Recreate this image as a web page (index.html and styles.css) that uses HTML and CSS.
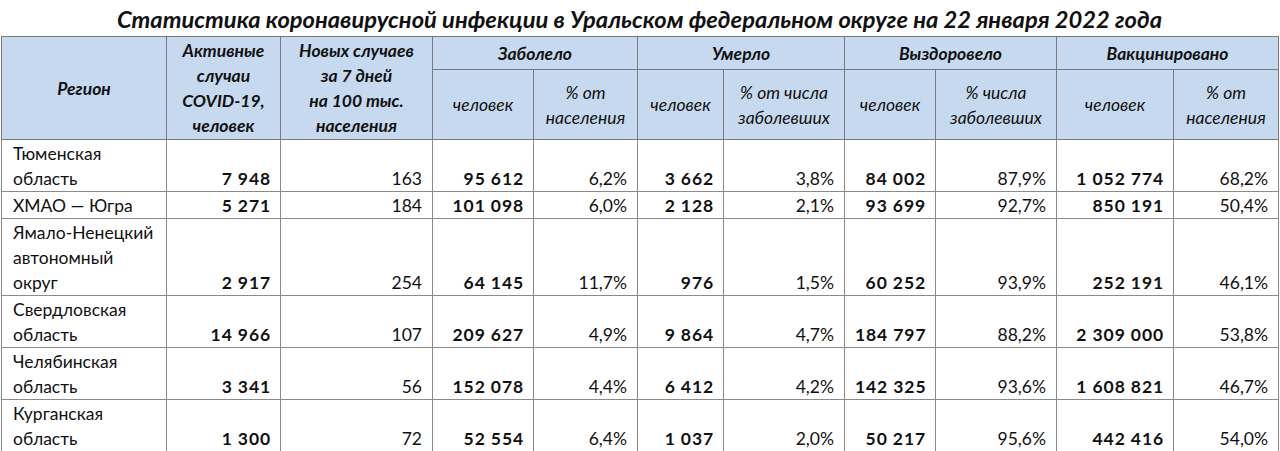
FILE: index.html
```html
<!DOCTYPE html>
<html lang="ru">
<head>
<meta charset="utf-8">
<title>Статистика коронавирусной инфекции</title>
<link rel="stylesheet" href="styles.css">
</head>
<body>
<h1 class="title">Статистика коронавирусной инфекции в Уральском федеральном округе на 22 января 2022 года</h1>
<table class="stats">
  <colgroup>
    <col class="c-region">
    <col class="c-active">
    <col class="c-new">
    <col class="c-ill-n">
    <col class="c-ill-p">
    <col class="c-died-n">
    <col class="c-died-p">
    <col class="c-rec-n">
    <col class="c-rec-p">
    <col class="c-vac-n">
    <col class="c-vac-p">
  </colgroup>
  <thead>
    <tr class="h1">
      <th rowspan="2" class="bold">Регион</th>
      <th rowspan="2" class="bold">Активные<br>случаи<br>COVID-19,<br>человек</th>
      <th rowspan="2" class="bold">Новых случаев<br>за 7 дней<br>на 100 тыс.<br>населения</th>
      <th colspan="2" class="bold">Заболело</th>
      <th colspan="2" class="bold">Умерло</th>
      <th colspan="2" class="bold">Выздоровело</th>
      <th colspan="2" class="bold">Вакцинировано</th>
    </tr>
    <tr class="h2">
      <th>человек</th>
      <th>% от<br>населения</th>
      <th>человек</th>
      <th>% от числа<br>заболевших</th>
      <th>человек</th>
      <th>% числа<br>заболевших</th>
      <th>человек</th>
      <th>% от<br>населения</th>
    </tr>
  </thead>
  <tbody>
    <tr>
      <td class="reg">Тюменская<br>область</td>
      <td class="b">7 948</td><td>163</td>
      <td class="b">95 612</td><td>6,2%</td>
      <td class="b">3 662</td><td>3,8%</td>
      <td class="b">84 002</td><td>87,9%</td>
      <td class="b">1 052 774</td><td>68,2%</td>
    </tr>
    <tr>
      <td class="reg">ХМАО — Югра</td>
      <td class="b">5 271</td><td>184</td>
      <td class="b">101 098</td><td>6,0%</td>
      <td class="b">2 128</td><td>2,1%</td>
      <td class="b">93 699</td><td>92,7%</td>
      <td class="b">850 191</td><td>50,4%</td>
    </tr>
    <tr>
      <td class="reg">Ямало-Ненецкий<br>автономный<br>округ</td>
      <td class="b">2 917</td><td>254</td>
      <td class="b">64 145</td><td>11,7%</td>
      <td class="b">976</td><td>1,5%</td>
      <td class="b">60 252</td><td>93,9%</td>
      <td class="b">252 191</td><td>46,1%</td>
    </tr>
    <tr>
      <td class="reg">Свердловская<br>область</td>
      <td class="b">14 966</td><td>107</td>
      <td class="b">209 627</td><td>4,9%</td>
      <td class="b">9 864</td><td>4,7%</td>
      <td class="b">184 797</td><td>88,2%</td>
      <td class="b">2 309 000</td><td>53,8%</td>
    </tr>
    <tr>
      <td class="reg">Челябинская<br>область</td>
      <td class="b">3 341</td><td>56</td>
      <td class="b">152 078</td><td>4,4%</td>
      <td class="b">6 412</td><td>4,2%</td>
      <td class="b">142 325</td><td>93,6%</td>
      <td class="b">1 608 821</td><td>46,7%</td>
    </tr>
    <tr>
      <td class="reg">Курганская<br>область</td>
      <td class="b">1 300</td><td>72</td>
      <td class="b">52 554</td><td>6,4%</td>
      <td class="b">1 037</td><td>2,0%</td>
      <td class="b">50 217</td><td>95,6%</td>
      <td class="b">442 416</td><td>54,0%</td>
    </tr>
  </tbody>
</table>
</body>
</html>
```
FILE: styles.css
```css
html, body {
  margin: 0;
  padding: 0;
  background: #ffffff;
}
body {
  font-family: Lato, "Open Sans", "Noto Sans", sans-serif;
  color: #111;
  padding-left: 1px;
}
.title {
  margin: 0;
  height: 36px;
  box-sizing: border-box;
  padding-top: 6px;
  font-size: 23.7px;
  line-height: 26px;
  font-weight: 700;
  font-style: italic;
  text-align: center;
  color: #111;
  width: 1277px;
  white-space: nowrap;
}
.stats {
  border-collapse: collapse;
  table-layout: fixed;
  width: 1277px;
  font-size: 17.5px;
  line-height: 25px;
}
.c-region { width: 165px; }
.c-active { width: 114px; }
.c-new { width: 152px; }
.c-ill-n { width: 101px; }
.c-ill-p { width: 104px; }
.c-died-n { width: 86px; }
.c-died-p { width: 121px; }
.c-rec-n { width: 91px; }
.c-rec-p { width: 121px; }
.c-vac-n { width: 117px; }
.c-vac-p { width: 105px; }

.stats th {
  background: #c6d9ef;
  border: 1px solid #7a7a7a;
  font-style: italic;
  font-weight: 400;
  text-align: center;
  vertical-align: middle;
  padding: 0 2px;
  white-space: nowrap;
}
.stats th.bold { font-weight: 700; }
.stats .h1 { height: 33px; }
.stats .h2 { height: 70px; }

.stats td {
  border: 1px solid #8a8a8a;
  text-align: right;
  vertical-align: bottom;
  padding: 1px 10px 0 10px;
  white-space: nowrap;
}
.stats tbody tr { border-bottom: 1px solid #444; }
.stats td.reg {
  text-align: left;
  padding-left: 11px;
}
.stats td.b {
  font-weight: 700;
  letter-spacing: 0.9px;
  padding-right: 9px;
}
```
